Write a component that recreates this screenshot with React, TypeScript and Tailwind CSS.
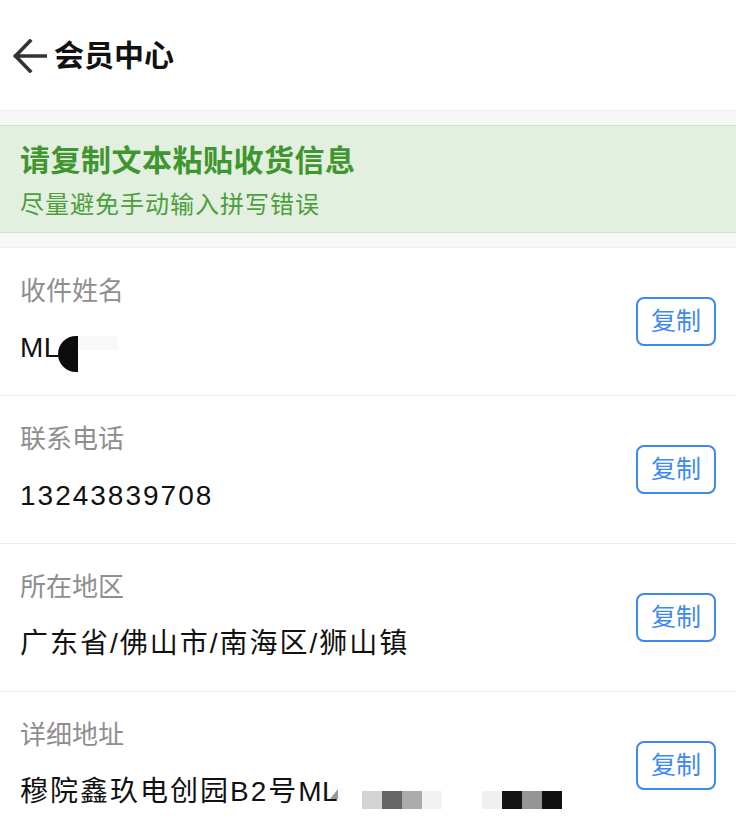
import React from "react";

const font = { fontFamily: '"Liberation Sans", "Noto Sans CJK SC", sans-serif' };

function BackArrow() {
  return (
    <svg width="34" height="34" viewBox="0 0 34 34" fill="none">
      <path d="M17 2 L2.5 17 L17 32 M2.5 17 H33" stroke="#333" strokeWidth="3.6" strokeLinecap="square" strokeLinejoin="miter" />
    </svg>
  );
}

function CopyButton() {
  return (
    <button className="w-[80px] h-[49px] shrink-0 rounded-[8px] border-2 border-[#3d88f2] text-[25px] leading-none text-[#3d88f2] flex items-center justify-center">
      复制
    </button>
  );
}

function Row({ label, children }: { label: string; children: React.ReactNode }) {
  return (
    <div className="flex items-center justify-between pl-[20px] pr-[20px] h-[148px] border-b border-[#eeeeee]">
      <div className="flex flex-col">
        <div className="text-[26px] leading-[36px] text-[#8e8e8e] mt-[-2px]">{label}</div>
        <div className="mt-[19px] text-[28px] leading-[40px] tracking-[2px] text-[#111] flex items-center h-[40px]">
          {children}
        </div>
      </div>
      <CopyButton />
    </div>
  );
}

export default function App() {
  return (
    <div className="w-[736px] min-h-[838px] bg-white" style={font}>
      <div className="h-[110px] flex items-center pl-[13px] pt-[1px]">
        <BackArrow />
        <span className="ml-[7px] text-[30px] font-bold text-[#111] leading-none">会员中心</span>
      </div>
      <div className="h-[15px] bg-[#f7f7f7] border-t border-[#f0f0f0]" />
      <div className="bg-[#e3efe0] border-y border-[#cce3c8] pl-[20px] pt-[15px] pb-[11px]">
        <div className="text-[30px] leading-[40px] font-bold text-[#3f962f] tracking-[0.5px]">请复制文本粘贴收货信息</div>
        <div className="mt-[8px] text-[24px] leading-[32px] text-[#4d9f3e] tracking-[1px]">尽量避免手动输入拼写错误</div>
      </div>
      <div className="h-[15px] bg-[#f7f7f7] border-b border-[#f0f0f0]" />
      <Row label="收件姓名">
        <span className="tracking-[0.5px]">ML</span>
        <span className="w-[20px] h-[36px] bg-[#0c0c0c] rounded-l-full mt-[12px] ml-[-2px]" />
        <span className="w-[40px] h-[14px] bg-[#f8f8f8] mt-[-10px]" />
      </Row>
      <Row label="联系电话">
        <span>13243839708</span>
      </Row>
      <Row label="所在地区">
        <span>广东省/佛山市/南海区/狮山镇</span>
      </Row>
      <Row label="详细地址">
        <span>穆院鑫玖电创园B2号<span className="tracking-[0.5px]">ML</span></span>
        <span className="w-0 h-0 border-l-[8px] border-l-transparent border-b-[10px] border-b-[#999] mt-[4px] ml-[-8px]" />
        <span className="flex ml-[24px] mt-[16px]">
          <span className="w-[20px] h-[18px] bg-[#d4d4d4]" />
          <span className="w-[20px] h-[18px] bg-[#666666]" />
          <span className="w-[20px] h-[18px] bg-[#ababab]" />
          <span className="w-[20px] h-[18px] bg-[#f2f2f2]" />
          <span className="w-[40px] h-[18px]" />
          <span className="w-[20px] h-[18px] bg-[#f0f0f0]" />
          <span className="w-[20px] h-[18px] bg-[#141414]" />
          <span className="w-[20px] h-[18px] bg-[#959595]" />
          <span className="w-[20px] h-[18px] bg-[#111111]" />
        </span>
      </Row>
    </div>
  );
}
